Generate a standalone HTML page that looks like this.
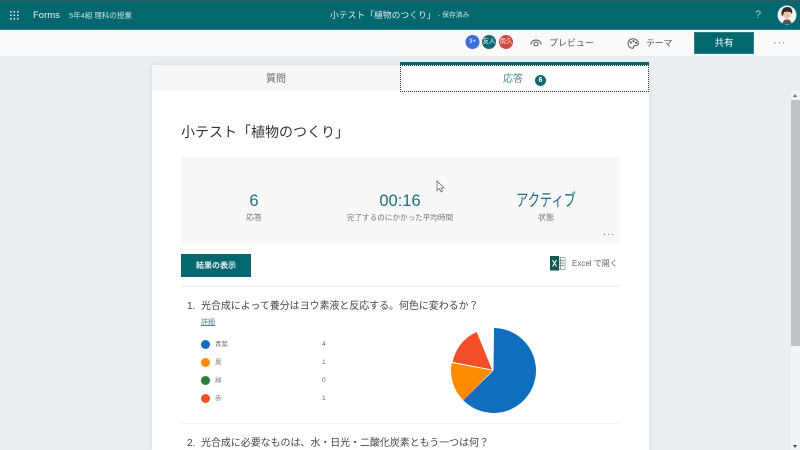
<!DOCTYPE html>
<html lang="ja"><head><meta charset="utf-8"><style>
html,body{margin:0;padding:0;width:800px;height:450px;overflow:hidden;background:#e9eef1}
body{position:relative;font-family:"Liberation Sans","Noto Sans CJK JP",sans-serif;color:#444}
.a{position:absolute;white-space:nowrap;line-height:1}
.c{transform:translateX(-50%)}
.b{position:absolute}
</style></head><body>
<div class="b" style="left:0;top:0;width:800px;height:30px;background:#03676f;border-top:1px solid #3a5a60;border-bottom:1px solid #2a8a90;box-sizing:border-box"></div>
<div class="b" style="left:0;top:30px;width:800px;height:26px;background:#fafafa"></div>
<svg class="b" style="left:9px;top:10px" width="11" height="11" fill="#cfe3e5"><rect x="1" y="1" width="1.6" height="1.6"/><rect x="4.5" y="1" width="1.6" height="1.6"/><rect x="8" y="1" width="1.6" height="1.6"/><rect x="1" y="4.5" width="1.6" height="1.6"/><rect x="4.5" y="4.5" width="1.6" height="1.6"/><rect x="8" y="4.5" width="1.6" height="1.6"/><rect x="1" y="8" width="1.6" height="1.6"/><rect x="4.5" y="8" width="1.6" height="1.6"/><rect x="8" y="8" width="1.6" height="1.6"/></svg>
<div class="a" style="left:33px;top:11px;font-size:9.5px;color:#eaf4f5">Forms</div>
<div class="a" style="left:69px;top:12px;font-size:7.5px;color:#cfe3e5">5年4組 理科の授業</div>
<div class="a" style="left:330px;top:11px;font-size:8.8px;color:#e0eeef">小テスト「植物のつくり」</div>
<div class="a" style="left:438px;top:13px;font-size:6.8px;color:#cfe3e5">- 保存済み</div>
<div class="a" style="left:755px;top:10px;font-size:11px;color:#a9cdd0">?</div>
<svg class="b" style="left:777px;top:5px" width="20" height="20"><circle cx="10" cy="10" r="9.5" fill="#f2f0ee"/><path d="M4.5 10C4 4 7 2 10.500 2S16 5 15 9L13 7L7 7L6 11Z" fill="#3a2c28"/><circle cx="10" cy="10" r="3.500" fill="#e8c4ae"/><path d="M5.500 19C6 15 8 14.500 10 14.500S14 15 14.500 19Z" fill="#555"/></svg>

<svg class="b" style="left:464px;top:34px" width="50" height="16"><circle cx="8.500" cy="8" r="7" fill="#3a6fd8"/><circle cx="25" cy="8" r="7" fill="#0f6a78"/><circle cx="42" cy="8" r="7" fill="#cf4a3c"/></svg>
<div class="a c" style="left:472.500px;top:39px;font-size:6px;color:#fff">3+</div>
<div class="a c" style="left:489px;top:39px;font-size:6.500px;color:#e5eeee">友人</div>
<div class="a c" style="left:506px;top:39px;font-size:6.500px;color:#fadcd8">南久</div>
<svg class="b" style="left:529px;top:37px" width="14" height="12" fill="none" stroke="#555" stroke-width="1"><path d="M1.500 7.500C3.500 1.500 10.500 1.500 12.500 7.500"/><circle cx="7" cy="7" r="2"/></svg>
<div class="a" style="left:549px;top:39px;font-size:9px;color:#555">プレビュー</div>
<svg class="b" style="left:627px;top:38px" width="12" height="11" fill="none" stroke="#555" stroke-width="1"><path d="M6 .7C3 .7 1 3 1 5.500S3 10.300 5.500 10.300C7 10.300 6.500 9 6.500 8.500S7.500 7.500 9 7.500S11.300 6.500 11.300 5S9 .7 6 .7Z"/><circle cx="3.800" cy="4.500" r=".6"/><circle cx="6.500" cy="3.200" r=".6"/><circle cx="9" cy="4.800" r=".6"/></svg>
<div class="a" style="left:646px;top:39px;font-size:8.800px;color:#555">テーマ</div>
<div class="b" style="left:694px;top:32px;width:60px;height:22px;background:#03676f;box-sizing:border-box;border:1px solid #2f7d85"></div>
<div class="a c" style="left:724px;top:39px;font-size:9.500px;color:#fff">共有</div>
<div class="a" style="left:773px;top:38px;font-size:11px;color:#666;letter-spacing:.8px">···</div>

<div class="b" style="left:152px;top:65px;width:497px;height:385px;background:#fff;box-shadow:0 0 5px rgba(120,130,135,.2)"></div>
<div class="b" style="left:152px;top:65px;width:248px;height:26px;background:#f6f7f7"></div>
<div class="a c" style="left:276px;top:75px;font-size:10px;color:#666">質問</div>
<div class="b" style="left:400px;top:62px;width:249px;height:3px;background:#03676f"></div>
<div class="b" style="left:400px;top:65px;width:249px;height:27px;background:#fff;box-sizing:border-box;border:1px dotted #333"></div>
<div class="a" style="left:503px;top:75px;font-size:10px;color:#4a8a92">応答</div>
<div class="b" style="left:535px;top:75px;width:11px;height:11px;border-radius:50%;background:#03676f"></div>
<div class="a c" style="left:540.500px;top:77px;font-size:7px;font-weight:bold;color:#fff">6</div>

<div class="a" style="left:181px;top:125px;font-size:14px;color:#333">小テスト「植物のつくり」</div>

<div class="b" style="left:181px;top:157px;width:439px;height:87px;background:#f8f8f8"></div>
<div class="a c" style="left:254px;top:193px;font-size:16.500px;color:#1a6d79">6</div>
<div class="a c" style="left:254px;top:214px;font-size:8px;color:#777">応答</div>
<div class="a c" style="left:400px;top:193px;font-size:16.500px;color:#1a6d79">00:16</div>
<div class="a c" style="left:400px;top:214px;font-size:7.600px;color:#777">完了するのにかかった平均時間</div>
<div class="a" style="left:546px;top:192px;font-size:17px;color:#1a6d79;transform:translateX(-50%) scaleX(.72)">アクティブ</div>
<div class="a c" style="left:546px;top:214px;font-size:8px;color:#777">状態</div>
<div class="a" style="left:603px;top:230px;font-size:10px;color:#666;letter-spacing:.7px">···</div>
<svg class="b" style="left:436px;top:180px" width="10" height="14" fill="#fff" stroke="#667" stroke-width=".8"><path d="M1 1V10.500L3.300 8.500L5 12L6.500 11.300L5 8H8Z"/></svg>

<div class="b" style="left:181px;top:254px;width:70px;height:23px;background:#03676f"></div>
<div class="a c" style="left:216px;top:262px;font-size:8px;font-weight:bold;color:#e8f2f3">結果の表示</div>
<svg class="b" style="left:550px;top:255px" width="16" height="17"><rect x="6" y="2.500" width="9" height="12" fill="#fff" stroke="#8a9a9a" stroke-width=".8"/><path d="M8 5.500H14M8 8H14M8 10.500H14M10.500 3V14" stroke="#4d7a70" stroke-width=".7"/><rect x="0" y="1" width="9" height="14.500" fill="#0f5a50"/><path d="M2.500 5L6.500 11.500M6.500 5L2.500 11.500" stroke="#fff" stroke-width="1.100"/></svg>
<div class="a" style="left:572px;top:260px;font-size:8px;color:#666">Excel で開く</div>
<div class="b" style="left:181px;top:285px;width:439px;height:2px;background:#f0f3f6"></div>

<div class="a" style="left:187px;top:302px;font-size:10px;color:#444">1.</div>
<div class="a" style="left:201px;top:302px;font-size:9.950px;color:#444">光合成によって養分はヨウ素液と反応する。何色に変わるか？</div>
<div class="a" style="left:201px;top:319px;font-size:7px;color:#4a8a92;text-decoration:underline">詳細</div>

<div class="b" style="left:201px;top:340px;width:9px;height:9px;border-radius:50%;background:#106ebe"></div>
<div class="a" style="left:215px;top:342px;font-size:6.500px;color:#777">青紫</div>
<div class="a" style="left:322px;top:342px;font-size:6.500px;color:#666">4</div>
<div class="b" style="left:201px;top:358px;width:9px;height:9px;border-radius:50%;background:#ff8c00"></div>
<div class="a" style="left:215px;top:360px;font-size:6.500px;color:#777">黒</div>
<div class="a" style="left:322px;top:360px;font-size:6.500px;color:#666">1</div>
<div class="b" style="left:201px;top:376px;width:9px;height:9px;border-radius:50%;background:#2b7d3a"></div>
<div class="a" style="left:215px;top:378px;font-size:6.500px;color:#777">緑</div>
<div class="a" style="left:322px;top:378px;font-size:6.500px;color:#666">0</div>
<div class="b" style="left:201px;top:394px;width:9px;height:9px;border-radius:50%;background:#f25022"></div>
<div class="a" style="left:215px;top:396px;font-size:6.500px;color:#777">赤</div>
<div class="a" style="left:322px;top:396px;font-size:6.500px;color:#666">1</div>

<svg class="b" style="left:440px;top:320px" width="110" height="100">
<path d="M54 8A42.500 42.500 0 1 1 23.200 80.300L53.500 50.500Z" fill="#106ebe"/>
<path d="M23.200 80.300A42.500 42.500 0 0 1 11.700 43L52.500 50.500Z" fill="#ff8c00"/>
<path d="M12.700 42A41 41 0 0 1 36.700 12L52 49.500Z" fill="#f34e27"/>
</svg>
<div class="b" style="left:181px;top:423px;width:439px;height:1px;background:#f1f3f5"></div>
<div class="a" style="left:187px;top:439px;font-size:10px;color:#444">2.</div>
<div class="a" style="left:201px;top:439px;font-size:9.950px;color:#444">光合成に必要なものは、水・日光・二酸化炭素ともう一つは何？</div>

<div class="b" style="left:791px;top:92px;width:9px;height:358px;background:#f3f3f3"></div>
<div class="b" style="left:791px;top:100px;width:9px;height:246px;background:#c1c1c1"></div>
<div class="b" style="left:793px;top:94px;width:0;height:0;border-left:2.500px solid transparent;border-right:2.500px solid transparent;border-bottom:3px solid #666"></div>
<div class="b" style="left:793px;top:445px;width:0;height:0;border-left:2.500px solid transparent;border-right:2.500px solid transparent;border-top:3px solid #444"></div>
</body></html>
